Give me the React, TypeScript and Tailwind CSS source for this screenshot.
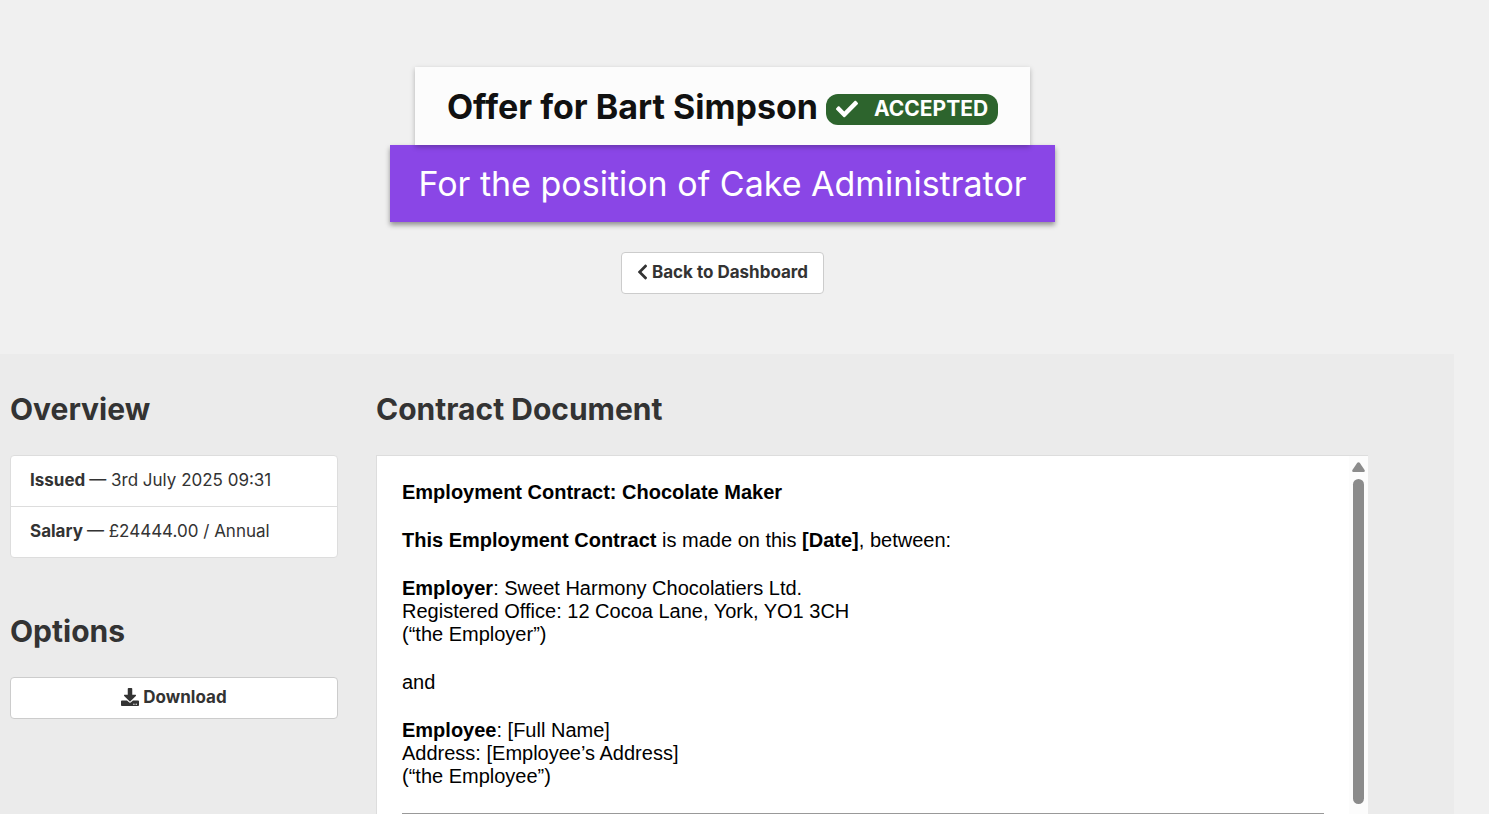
import { FaCheck, FaChevronLeft, FaDownload } from 'react-icons/fa'

const OVERVIEW = [
  { label: 'Issued', value: '3rd July 2025 09:31' },
  { label: 'Salary', value: '£24444.00 / Annual' },
]

function Header() {
  return (
    <header className="flex flex-col items-center pt-[67px] pr-11 pb-[60px]">
      <h1 className="relative z-10 flex h-[78px] items-center gap-2 bg-[#fcfcfc] px-8 text-[34px] font-bold text-[#111] shadow-[0_2px_5px_rgba(0,0,0,0.26)]">
        Offer for Bart Simpson
        <span className="mt-1.5 flex h-[31px] items-center gap-4 rounded-xl bg-[#2d642d] px-[10px] text-[21px] text-white">
          <FaCheck className="size-[22px]" />
          ACCEPTED
        </span>
      </h1>
      <h2 className="flex h-[77px] items-center bg-[#8a46e6] px-7 text-[34px] text-white shadow-[0_3px_5px_rgba(0,0,0,0.4)]">
        For the position of Cake Administrator
      </h2>
      <a href="#dashboard" className="mt-[30px] flex h-[42px] items-center gap-1 rounded border border-[#ccc] bg-white px-[15px] text-[17px] font-bold">
        <FaChevronLeft className="mb-0.5 h-[18px] w-[11px]" />
        Back to Dashboard
      </a>
    </header>
  )
}

function Sidebar() {
  return (
    <aside className="w-[328px] shrink-0">
      <h3 className="text-[30px] leading-8 font-bold">Overview</h3>
      <ul className="mt-[30px] divide-y divide-[#ddd] rounded border border-[#ddd] bg-white">
        {OVERVIEW.map(o => (
          <li key={o.label} className="flex h-[51px] items-center gap-1 px-[19px] text-[17px] last:h-[50px]">
            <strong>{o.label}</strong> — {o.value}
          </li>
        ))}
      </ul>
      <h3 className="mt-[57px] text-[30px] leading-8 font-bold">Options</h3>
      <button type="button" className="mt-[30px] flex h-[42px] w-full items-center justify-center gap-1 rounded border border-[#ccc] bg-white text-[17px] font-bold">
        <FaDownload className="mb-0.5 size-[18px]" />
        Download
      </button>
    </aside>
  )
}

function ContractDocument() {
  return (
    <section className="flex min-w-0 flex-1 flex-col">
      <h3 className="text-[30px] leading-8 font-bold">Contract Document</h3>
      <div className="mt-[30px] flex min-h-0 flex-1 overflow-hidden border-t border-l border-[#ddd] bg-white">
        <article className="flex-1 space-y-[25px] p-[25px] font-['Liberation_Sans',Arial,sans-serif] text-[20px] leading-[23px] text-black">
          <p><strong>Employment Contract: Chocolate Maker</strong></p>
          <p><strong>This Employment Contract</strong> is made on this <strong>[Date]</strong>, between:</p>
          <p>
            <strong>Employer</strong>: Sweet Harmony Chocolatiers Ltd.<br />
            Registered Office: 12 Cocoa Lane, York, YO1 3CH<br />
            (“the Employer”)
          </p>
          <p>and</p>
          <p>
            <strong>Employee</strong>: [Full Name]<br />
            Address: [Employee’s Address]<br />
            (“the Employee”)
          </p>
          <hr className="border-[#999]" />
        </article>
        {/* scrollbar */}
        <div className="flex w-[19px] shrink-0 flex-col items-center gap-[7px] bg-[#fcfcfc] pt-[6px] pb-[10px]">
          <svg viewBox="0 0 13 10" className="h-[10px] w-[13px] shrink-0" fill="#8b8b8b">
            <path d="M5.3.8Q6.5-.5 7.7.8L12.6 8Q13.3 10 11.6 10H1.4Q-.3 10 .4 8Z" />
          </svg>
          <div className="w-[11px] flex-1 rounded-full bg-[#8b8b8b]" />
        </div>
      </div>
    </section>
  )
}

export default function App() {
  return (
    <div className="flex h-screen flex-col overflow-hidden bg-[#f0f0f0] font-[Inter,sans-serif] text-[#333]">
      <Header />
      <main className="mr-[35px] flex min-h-0 flex-1 gap-[38px] bg-[#ebebeb] pt-[39px] pr-[86px] pl-[10px]">
        <Sidebar />
        <ContractDocument />
      </main>
    </div>
  )
}
